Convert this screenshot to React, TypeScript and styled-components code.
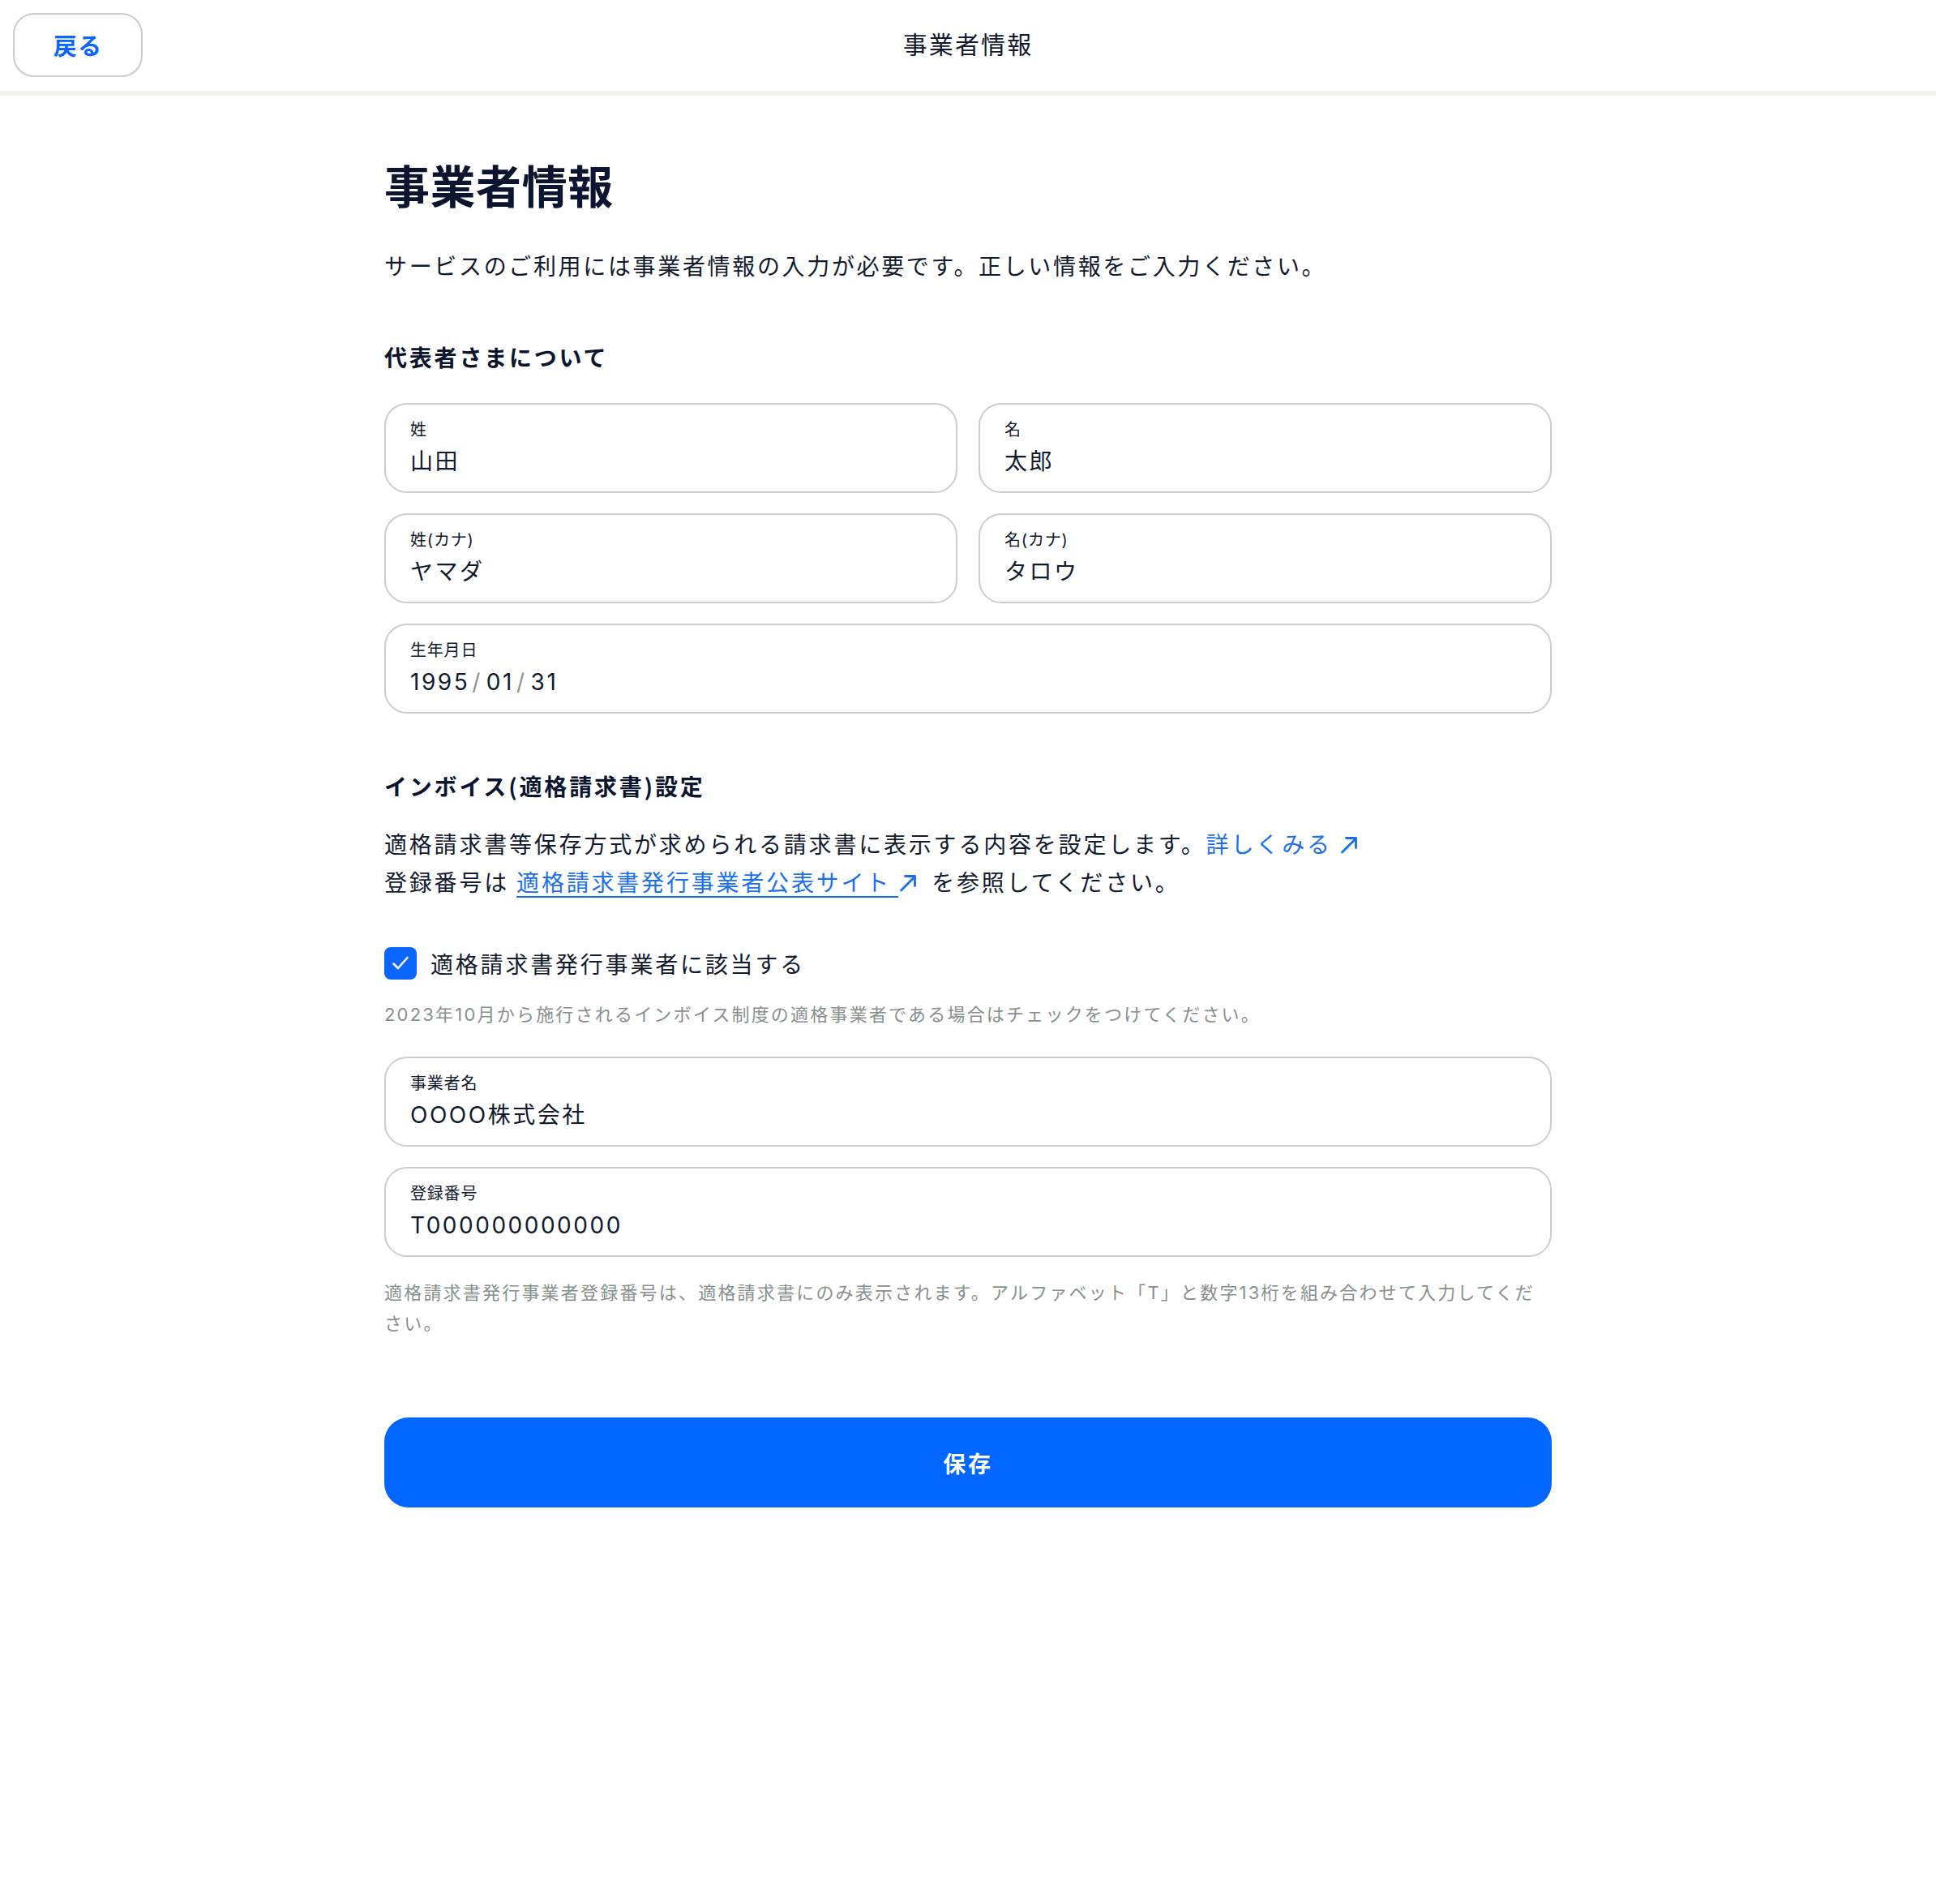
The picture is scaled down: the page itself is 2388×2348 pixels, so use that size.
import React from 'react';
import styled, { createGlobalStyle } from 'styled-components';

const GlobalStyle = createGlobalStyle`
  html, body {
    margin: 0;
    padding: 0;
    background: #ffffff;
  }
  body {
    font-family: "Noto Sans CJK JP", "Noto Sans", "Liberation Sans", sans-serif;
    color: #111a2e;
  }
  * {
    box-sizing: border-box;
  }
`;

const colors = {
  text: '#111a2e',
  title: '#0c1530',
  blue: '#0a66ff',
  link: '#1a6fef',
  gray: '#87908c',
  border: '#cbcfc9',
};

// latin digits in the reference are wider than the CJK font's own
const latinFirst = `"Inter", "Noto Sans CJK JP", sans-serif`;

type Field = { label: string; value: React.ReactNode };

const nameFields: Field[] = [
  { label: '姓', value: '山田' },
  { label: '名', value: '太郎' },
  { label: '姓(カナ)', value: 'ヤマダ' },
  { label: '名(カナ)', value: 'タロウ' },
];

const ArrowIcon = () => (
  <svg width="24" height="24" viewBox="0 0 24 24" fill="none">
    <path d="M3.5 21 L20 4.5" stroke="currentColor" strokeWidth="2.8" strokeLinecap="round" />
    <path d="M8.5 3.5 H20.5 V15.5" stroke="currentColor" strokeWidth="2.8" strokeLinecap="round" strokeLinejoin="round" />
  </svg>
);

const CheckIcon = () => (
  <svg width="30" height="30" viewBox="0 0 30 30" fill="none">
    <path d="M6.5 15.5 L12 21 L23.5 8" stroke="#ffffff" strokeWidth="2.6" strokeLinecap="round" strokeLinejoin="round" />
  </svg>
);

const InputBox = ({ label, value }: Field) => (
  <FieldBox>
    <FieldLabel>{label}</FieldLabel>
    <FieldValue>{value}</FieldValue>
  </FieldBox>
);

export default function App() {
  return (
    <Page>
      <GlobalStyle />
      <Header>
        <BackButton>戻る</BackButton>
        <HeaderTitle>事業者情報</HeaderTitle>
        <span />
      </Header>

      <Main>
        <Title>事業者情報</Title>
        <Lead>サービスのご利用には事業者情報の入力が必要です。正しい情報をご入力ください。</Lead>

        <SectionTitle>代表者さまについて</SectionTitle>
        <FieldGrid>
          {nameFields.map((f) => (
            <InputBox key={f.label} label={f.label} value={f.value} />
          ))}
          <Wide>
            <InputBox
              label="生年月日"
              value={
                <>
                  1995<Sep>/</Sep>01<Sep>/</Sep>31
                </>
              }
            />
          </Wide>
        </FieldGrid>

        <SectionTitle $gap={67}>インボイス(適格請求書)設定</SectionTitle>
        <Paragraph>
          適格請求書等保存方式が求められる請求書に表示する内容を設定します。
          <Link>
            詳しくみる <ArrowIcon />
          </Link>
          <br />
          登録番号は{' '}
          <Link $underline>適格請求書発行事業者公表サイト </Link>
          <Link $after={8}>
            {' '}
            <ArrowIcon />
          </Link>{' '}
          を参照してください。
        </Paragraph>

        <CheckRow>
          <CheckBox>
            <CheckIcon />
          </CheckBox>
          <CheckLabel>適格請求書発行事業者に該当する</CheckLabel>
        </CheckRow>
        <Help $top={22}>2023年10月から施行されるインボイス制度の適格事業者である場合はチェックをつけてください。</Help>

        <FieldGrid $top={33}>
          <Wide>
            <InputBox label="事業者名" value="OOOO株式会社" />
          </Wide>
          <Wide>
            <InputBox label="登録番号" value="T000000000000" />
          </Wide>
        </FieldGrid>
        <Help $top={25}>
          適格請求書発行事業者登録番号は、適格請求書にのみ表示されます。アルファベット「T」と数字13桁を組み合わせて入力してください。
        </Help>

        <SaveButton>保存</SaveButton>
      </Main>
    </Page>
  );
}

const Page = styled.div`
  min-height: 2348px;
  background: #ffffff;
`;

const Header = styled.header`
  display: grid;
  grid-template-columns: 1fr auto 1fr;
  align-items: center;
  height: 118px;
  padding: 16px 16px 17px;
  border-bottom: 6px solid #f2f2ef;
`;

const BackButton = styled.button`
  justify-self: start;
  width: 160px;
  height: 79px;
  padding: 0 0 2px;
  border: 2px solid ${colors.border};
  border-radius: 26px;
  background: #ffffff;
  color: ${colors.blue};
  font-family: inherit;
  font-size: 29px;
  font-weight: 700;
  letter-spacing: 0.04em;
  cursor: pointer;
`;

const HeaderTitle = styled.h1`
  margin: -6px 0 0;
  font-size: 30px;
  font-weight: 400;
  letter-spacing: 0.07em;
  color: ${colors.text};
`;

const Main = styled.main`
  width: 1440px;
  margin: 0 auto;
  padding: 70px 0 120px;
  display: flex;
  flex-direction: column;
`;

const Title = styled.h2`
  margin: 0;
  font-size: 56px;
  line-height: 78px;
  font-weight: 700;
  letter-spacing: 0.01em;
  color: ${colors.title};
`;

const Lead = styled.p`
  margin: 39px 0 0;
  font-size: 28px;
  line-height: 45px;
  letter-spacing: 0.095em;
  color: ${colors.text};
`;

const SectionTitle = styled.h3<{ $gap?: number }>`
  margin: ${({ $gap }) => $gap ?? 68}px 0 0;
  font-size: 28px;
  line-height: 45px;
  font-weight: 700;
  letter-spacing: 0.1em;
  color: ${colors.title};
`;

const FieldGrid = styled.div<{ $top?: number }>`
  display: grid;
  grid-template-columns: 1fr 1fr;
  gap: 25px 26px;
  margin-top: ${({ $top }) => $top ?? 34}px;
`;

const Wide = styled.div`
  grid-column: 1 / -1;
`;

const FieldBox = styled.div`
  display: flex;
  flex-direction: column;
  height: 111px;
  padding: 19px 30px 16px;
  border: 2px solid ${colors.border};
  border-radius: 28px;
  background: #ffffff;
`;

const FieldLabel = styled.span`
  font-family: ${latinFirst};
  font-size: 20px;
  line-height: 24px;
  letter-spacing: 0.04em;
  color: ${colors.text};
`;

const FieldValue = styled.span`
  margin-top: 9px;
  font-family: ${latinFirst};
  font-size: 28px;
  line-height: 36px;
  letter-spacing: 0.09em;
  color: ${colors.text};
`;

const Sep = styled.span`
  margin: 0 5px 0 3px;
  color: #8d9591;
`;

const Paragraph = styled.p`
  margin: 25px 0 0;
  font-size: 28px;
  line-height: 47px;
  letter-spacing: 0.1em;
  color: ${colors.text};
`;

const Link = styled.a<{ $underline?: boolean; $after?: number }>`
  margin-right: ${({ $after }) => $after ?? 0}px;
  color: ${colors.link};
  text-decoration: ${({ $underline }) => ($underline ? 'underline' : 'none')};
  text-decoration-thickness: 2px;
  text-underline-offset: 6px;
  cursor: pointer;
  svg {
    vertical-align: -2px;
  }
`;

const CheckRow = styled.label`
  display: flex;
  align-items: center;
  gap: 17px;
  margin-top: 54px;
  height: 45px;
`;

const CheckBox = styled.span`
  display: flex;
  align-items: center;
  justify-content: center;
  width: 40px;
  height: 40px;
  border-radius: 8px;
  background: ${colors.blue};
`;

const CheckLabel = styled.span`
  font-size: 28px;
  letter-spacing: 0.1em;
  color: ${colors.text};
`;

const Help = styled.p<{ $top?: number }>`
  margin: ${({ $top }) => $top ?? 20}px 0 0;
  font-family: ${latinFirst};
  font-size: 22px;
  line-height: 38px;
  letter-spacing: 0.1em;
  color: ${colors.gray};
`;

const SaveButton = styled.button`
  margin-top: 97px;
  width: 100%;
  height: 111px;
  border: none;
  border-radius: 30px;
  background: #0066ff;
  color: #ffffff;
  font-family: inherit;
  font-size: 28px;
  font-weight: 700;
  letter-spacing: 0.1em;
  cursor: pointer;
`;
